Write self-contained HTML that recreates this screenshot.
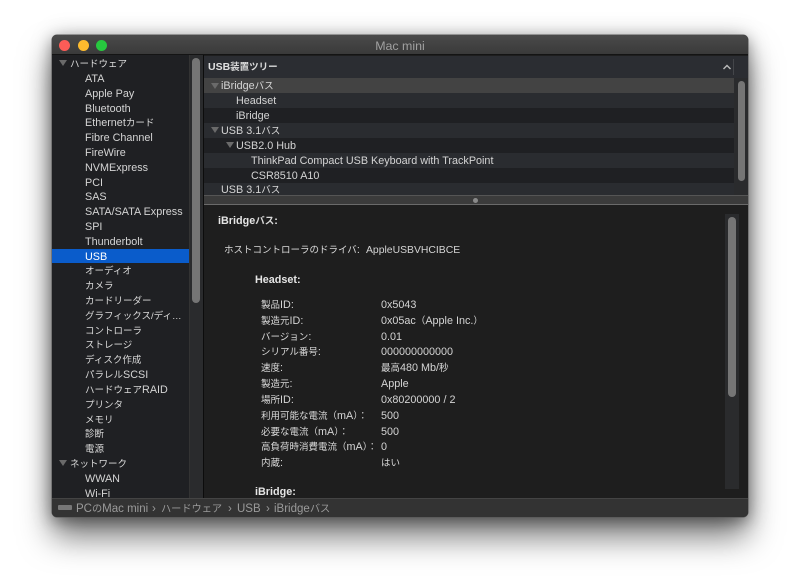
<!DOCTYPE html>
<html><head><meta charset="utf-8"><style>
html,body{margin:0;padding:0;background:#fff;width:800px;height:586px;overflow:hidden}
body{font-family:"Liberation Sans","Noto Sans CJK JP",sans-serif;font-size:10.8px;color:#d4d4d4}
.a{position:absolute}
i{font-style:normal;font-size:9.5px;color:#dadada}
#w{position:absolute;left:52px;top:35px;width:696px;height:482px;border-radius:5px;background:#1e1e1e;box-shadow:0 0 0 .5px #555,0 20px 32px rgba(0,0,0,.52),0 4px 14px rgba(0,0,0,.3),0 0 24px rgba(0,0,0,.18);overflow:hidden}
#t{left:0;top:0;width:696px;height:20px;background:linear-gradient(#4a4a4a,#3a3a3a);border-bottom:1px solid #141414;box-sizing:border-box;text-align:center;line-height:22px;font-size:12.4px;color:#a0a0a0}
.d{position:absolute;top:5px;width:11px;height:11px;border-radius:50%}
#s{left:0;top:20px;width:151px;height:443px;background:#1f2023;overflow:hidden}
.r{position:absolute;white-space:nowrap;height:15px;line-height:15px;margin-top:1px}
#s .r{left:33px}
.tri{position:absolute;width:0;height:0;border-left:4.5px solid transparent;border-right:4.5px solid transparent;border-top:6.5px solid #6a6a6a}
.st{position:absolute;background:#2a2b2d}
.th{position:absolute;background:#757575;border-radius:4px}
.k{position:absolute;left:0;width:530px;height:15px}
.v{position:absolute;white-space:nowrap;line-height:15px;height:15px;margin-top:1px}
.p{color:#9a9a9a;font-size:11.5px;margin-top:2px}
.p i{font-size:10.2px;color:#9a9a9a}
</style></head><body>
<div id="w">
<div id="t" class="a">Mac mini</div>
<div class="d" style="left:7px;background:#fc5c57"></div>
<div class="d" style="left:26px;background:#febb2e"></div>
<div class="d" style="left:44px;background:#27c83f"></div>

<div id="s" class="a">
<div class="tri" style="left:7px;top:5px"></div>
<div class="r" style="left:18px;top:0.5px"><i>ハードウェア</i></div>
<div class="r" style="top:16px">ATA</div>
<div class="r" style="top:31px">Apple Pay</div>
<div class="r" style="top:46px">Bluetooth</div>
<div class="r" style="top:60px">Ethernet<i>カード</i></div>
<div class="r" style="top:74.5px">Fibre Channel</div>
<div class="r" style="top:89.5px">FireWire</div>
<div class="r" style="top:104.5px">NVMExpress</div>
<div class="r" style="top:120px">PCI</div>
<div class="r" style="top:134px">SAS</div>
<div class="r" style="top:149px">SATA/SATA Express</div>
<div class="r" style="top:163.5px">SPI</div>
<div class="r" style="top:178.5px">Thunderbolt</div>
<div class="a" style="left:0;top:194px;width:137px;height:14px;background:#0a5ccb"></div>
<div class="r" style="top:193.5px;color:#fff">USB</div>
<div class="r" style="top:208px"><i>オーディオ</i></div>
<div class="r" style="top:223px"><i>カメラ</i></div>
<div class="r" style="top:238px"><i>カードリーダー</i></div>
<div class="r" style="top:252.5px"><i>グラフィックス/ディ…</i></div>
<div class="r" style="top:267.5px"><i>コントローラ</i></div>
<div class="r" style="top:282px"><i>ストレージ</i></div>
<div class="r" style="top:297px"><i>ディスク作成</i></div>
<div class="r" style="top:312px"><i>パラレル</i>SCSI</div>
<div class="r" style="top:327px"><i>ハードウェア</i>RAID</div>
<div class="r" style="top:341.5px"><i>プリンタ</i></div>
<div class="r" style="top:356.5px"><i>メモリ</i></div>
<div class="r" style="top:371px"><i>診断</i></div>
<div class="r" style="top:386px"><i>電源</i></div>
<div class="tri" style="left:7px;top:405px"></div>
<div class="r" style="left:18px;top:400.5px"><i>ネットワーク</i></div>
<div class="r" style="top:416px">WWAN</div>
<div class="r" style="top:431px">Wi-Fi</div>
<div class="st" style="left:137px;top:0;width:14px;height:443px;border-left:1px solid #333;box-sizing:border-box"></div>
<div class="th" style="left:140px;top:3px;width:8px;height:245px"></div>
</div>
<div class="a" style="left:151px;top:20px;width:1px;height:443px;background:#0c0c0c"></div>

<div class="a" style="left:152px;top:21px;width:544px;height:22px;background:#2b2d32"></div>
<div class="v" style="left:156px;top:24px;font-weight:bold;color:#e0e0e0;font-size:10.5px"><b>USB</b><i>装置ツリー</i></div>
<svg class="a" style="left:670px;top:28px" width="10" height="8"><path d="M1.5 6 L5 2.5 L8.5 6" fill="none" stroke="#bbb" stroke-width="1.4"/></svg>
<div class="a" style="left:681px;top:24px;width:1px;height:16px;background:#44464a"></div>

<div class="a" style="left:152px;top:43px;width:544px;height:117px;background:#2a2b2d;overflow:hidden">
<div class="k" style="top:0;height:15px;width:530px;background:#434343"></div>
<div class="k" style="top:15px;background:#2a2c30"></div>
<div class="k" style="top:30px;background:#1f2023"></div>
<div class="k" style="top:45px;background:#2a2c30"></div>
<div class="k" style="top:60px;background:#1f2023"></div>
<div class="k" style="top:75px;background:#2a2c30"></div>
<div class="k" style="top:90px;background:#1f2023"></div>
<div class="k" style="top:105px;background:#2a2c30"></div>
<div class="tri" style="left:7px;top:5px"></div>
<div class="v" style="left:17px;top:0">iBridge<i>バス</i></div>
<div class="v" style="left:32px;top:15px">Headset</div>
<div class="v" style="left:32px;top:30px">iBridge</div>
<div class="tri" style="left:7px;top:49px"></div>
<div class="v" style="left:17px;top:44.5px">USB 3.1<i>バス</i></div>
<div class="tri" style="left:22px;top:64px"></div>
<div class="v" style="left:32px;top:59.5px">USB2.0 Hub</div>
<div class="v" style="left:47px;top:74.5px">ThinkPad Compact USB Keyboard with TrackPoint</div>
<div class="v" style="left:47px;top:90px">CSR8510 A10</div>
<div class="v" style="left:17px;top:104px">USB 3.1<i>バス</i></div>
<div class="th" style="left:534px;top:3px;width:7px;height:100px"></div>
</div>

<div class="a" style="left:152px;top:160px;width:544px;height:10px;background:#3b3b3b;border-top:1px solid #555;border-bottom:1px solid #6a6a6a;box-sizing:border-box"></div>
<div class="a" style="left:421px;top:163px;width:5px;height:5px;border-radius:50%;background:#8a8a8a"></div>

<div class="v" style="left:166px;top:178px;font-weight:bold;color:#e6e6e6">iBridge<i>バス</i>:</div>
<div class="v" style="left:172px;top:207px"><i>ホストコントローラのドライバ</i>:</div>
<div class="v" style="left:314px;top:207px;font-size:10.4px">AppleUSBVHCIBCE</div>
<div class="v" style="left:203px;top:237px;font-weight:bold;color:#e6e6e6">Headset:</div>
<div class="v" style="left:209px;top:262px"><i>製品</i>ID:</div><div class="v" style="left:329px;top:262px">0x5043</div>
<div class="v" style="left:209px;top:277.5px"><i>製造元</i>ID:</div><div class="v" style="left:329px;top:277.5px">0x05ac<i>（</i>Apple Inc.<i>）</i></div>
<div class="v" style="left:209px;top:293.5px"><i>バージョン</i>:</div><div class="v" style="left:329px;top:293.5px">0.01</div>
<div class="v" style="left:209px;top:309px"><i>シリアル番号</i>:</div><div class="v" style="left:329px;top:309px">000000000000</div>
<div class="v" style="left:209px;top:325px"><i>速度</i>:</div><div class="v" style="left:329px;top:325px"><i>最高</i>480 Mb/<i>秒</i></div>
<div class="v" style="left:209px;top:341px"><i>製造元</i>:</div><div class="v" style="left:329px;top:341px">Apple</div>
<div class="v" style="left:209px;top:356.5px"><i>場所</i>ID:</div><div class="v" style="left:329px;top:356.5px">0x80200000 / 2</div>
<div class="v" style="left:209px;top:372.5px"><i>利用可能な電流（</i>mA<i>）：</i></div><div class="v" style="left:329px;top:372.5px">500</div>
<div class="v" style="left:209px;top:388.5px"><i>必要な電流（</i>mA<i>）：</i></div><div class="v" style="left:329px;top:388.5px">500</div>
<div class="v" style="left:209px;top:404px"><i>高負荷時消費電流（</i>mA<i>）：</i></div><div class="v" style="left:329px;top:404px">0</div>
<div class="v" style="left:209px;top:419.5px"><i>内蔵</i>:</div><div class="v" style="left:329px;top:419.5px"><i>はい</i></div>
<div class="v" style="left:203px;top:449px;font-weight:bold;color:#e6e6e6">iBridge:</div>

<div class="st" style="left:673px;top:179px;width:14px;height:275px"></div>
<div class="th" style="left:676px;top:182px;width:8px;height:180px"></div>

<div class="a" style="left:0;top:463px;width:696px;height:19px;background:#333;border-top:1px solid #444;box-sizing:border-box"></div>
<div class="a" style="left:6px;top:470px;width:14px;height:5px;background:#777;border-radius:1px"></div>
<div class="v p" style="left:24px;top:465px">PC<i>の</i>Mac mini</div>
<div class="v p" style="left:100px;top:465px">›</div>
<div class="v p" style="left:109px;top:465px"><i>ハードウェア</i></div>
<div class="v p" style="left:176px;top:465px">›</div>
<div class="v p" style="left:185px;top:465px">USB</div>
<div class="v p" style="left:214px;top:465px">›</div>
<div class="v p" style="left:222px;top:465px">iBridge<i>バス</i></div>
</div>
</body></html>
